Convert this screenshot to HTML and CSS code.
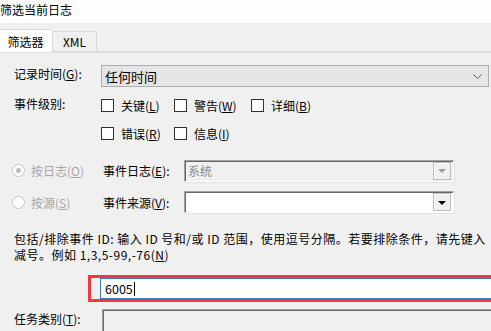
FILE: index.html
```html
<!DOCTYPE html>
<html>
<head>
  <meta charset="utf-8"/>
  <title>筛选当前日志</title>
  <link rel="stylesheet" href="styles.css">
</head>
<body>
  <div class="window-title">筛选当前日志</div>

  <div class="dialog">
    <div class="tabs">
      <div class="tab tab-active">筛选器</div>
      <div class="tab">XML</div>
    </div>

    <div class="panel">
      <div class="row row-time">
        <div class="label">记录时间(<u>G</u>):</div>
        <div class="select">
          <span>任何时间</span>
          <svg class="chevron" width="9" height="5" viewBox="0 0 9 5"><path d="M0.5 0.5 L4.5 4.5 L8.5 0.5" fill="none" stroke="#606060" stroke-width="1"/></svg>
        </div>
      </div>

      <div class="row row-level">
        <div class="label">事件级别:</div>
        <div class="checks">
          <div class="check-row">
            <label class="check check-a"><span class="box"></span><span>关键(<u>L</u>)</span></label>
            <label class="check check-b"><span class="box"></span><span>警告(<u>W</u>)</span></label>
            <label class="check"><span class="box"></span><span>详细(<u>B</u>)</span></label>
          </div>
          <div class="check-row">
            <label class="check check-a"><span class="box"></span><span>错误(<u>R</u>)</span></label>
            <label class="check check-b"><span class="box"></span><span>信息(<u>I</u>)</span></label>
          </div>
        </div>
      </div>

      <div class="row row-source first">
        <div class="radio-label disabled"><span class="radio on"></span><span>按日志(<u>O</u>)</span></div>
        <div class="field-label">事件日志(<u>E</u>):</div>
        <div class="combo combo-disabled">
          <span class="combo-text">系统</span>
          <span class="combo-btn"><span class="tri"></span></span>
        </div>
      </div>

      <div class="row row-source">
        <div class="radio-label disabled"><span class="radio"></span><span>按源(<u>S</u>)</span></div>
        <div class="field-label">事件来源(<u>V</u>):</div>
        <div class="combo">
          <span class="combo-text"></span>
          <span class="combo-btn"><span class="tri"></span></span>
        </div>
      </div>

      <p class="hint">包括/排除事件 ID: 输入 ID 号和/或 ID 范围，使用逗号分隔。若要排除条件，请先键入<br>减号。例如 1,3,5-99,-76(<u>N</u>)</p>

      <div class="highlight">
        <div class="id-input">6005<span class="caret"></span></div>
      </div>

      <div class="row row-task">
        <div class="label">任务类别(<u>T</u>):</div>
        <div class="task-box"></div>
      </div>
    </div>
  </div>
</body>
</html>
```

FILE: styles.css
```css
html, body {
  margin: 0;
  padding: 0;
  width: 100%;
  height: 100%;
  overflow: hidden;
}

body {
  background: #f0f0f0;
  font-family: "Noto Sans CJK SC", "Noto Sans", sans-serif;
  font-size: 12px;
  color: #000;
}

u {
  text-decoration: underline;
  text-underline-offset: 1px;
}

.window-title {
  height: 23px;
  line-height: 20px;
  background: #fdfdfd;
  white-space: nowrap;
}

.dialog {
  padding-top: 6px;
}

/* tabs */
.tabs {
  display: flex;
  align-items: flex-end;
  height: 22px;
  position: relative;
  z-index: 1;
}

.tab {
  height: 19px;
  line-height: 19px;
  width: 43px;
  text-align: center;
  border: 1px solid #d9d9d9;
  border-bottom: none;
  background: #f0f0f0;
}

.tab-active {
  height: 22px;
  line-height: 23px;
  width: 51px;
  background: #fff;
  border-left: none;
  border-right: none;
  margin-bottom: -1px;
  padding-right: 1px;
}

.tab-active + .tab {
  border-left: 1px solid #d9d9d9;
}

.panel {
  border-top: 1px solid #d9d9d9;
  box-shadow: inset 0 1px 0 #e3e3e3;
  padding: 13px 0 0 2px;
}

.row {
  display: flex;
  align-items: flex-start;
}

.label {
  width: 87px;
  padding-left: 12px;
  flex-shrink: 0;
  white-space: nowrap;
}

.row-time .label {
  line-height: 17px;
}

.select {
  display: flex;
  align-items: center;
  justify-content: space-between;
  width: 377px;
  height: 20px;
  border: 1px solid #adadad;
  background: #e5e5e5;
  padding: 0 6px 0 3px;
  font-size: 13px;
}

.chevron {
  margin-top: 1px;
}

/* event level */
.row-level {
  margin-top: 11px;
}

.row-level .label {
  line-height: 12px;
}

.checks {
  display: flex;
  flex-direction: column;
  gap: 15px;
  padding-top: 1px;
}

.check-row {
  display: flex;
  height: 13px;
  align-items: center;
}

.check {
  display: flex;
  align-items: center;
  gap: 7px;
  white-space: nowrap;
}

.check-a {
  width: 73px;
}

.check-b {
  width: 77px;
}

.box {
  width: 11px;
  height: 11px;
  border: 1px solid #333;
  background: #fff;
}

/* log / source */
.row-source {
  align-items: center;
  height: 22px;
  margin-top: 10px;
}

.row-source.first {
  margin-top: 20px;
  height: 21px;
}

.radio-label {
  display: flex;
  align-items: center;
  gap: 6px;
  width: 91px;
  padding-left: 10px;
  flex-shrink: 0;
  white-space: nowrap;
}

.disabled {
  color: #a6a6a6;
}

.radio {
  width: 11px;
  height: 11px;
  border: 1px solid #c4c4c4;
  border-radius: 50%;
  background: #fff;
  display: flex;
  align-items: center;
  justify-content: center;
}

.radio.on::after {
  content: "";
  width: 5px;
  height: 5px;
  border-radius: 50%;
  background: #bdbdbd;
}

.field-label {
  width: 81px;
  flex-shrink: 0;
  white-space: nowrap;
}

.combo {
  display: flex;
  align-items: center;
  justify-content: space-between;
  width: 264px;
  height: 18px;
  background: #fff;
  border-top: 1px solid #a0a0a0;
  border-left: 1px solid #a0a0a0;
  border-bottom: 1px solid #fff;
  border-right: 1px solid #fff;
  box-shadow: inset 1px 1px 0 #696969, 0 1px 0 #e3e3e3, 1px 0 0 #e3e3e3;
  padding: 1px 2px;
}

.combo-disabled {
  background: #f0f0f0;
  color: #8a8a8a;
}

.combo-text {
  padding-left: 1px;
}

.combo-btn {
  width: 16px;
  height: 16px;
  background: #f0f0f0;
  border: 1px solid #bcbcbc;
  box-shadow: inset 1px 1px 0 #fff;
  display: flex;
  align-items: center;
  justify-content: center;
}

.tri {
  width: 0;
  height: 0;
  border-left: 4px solid transparent;
  border-right: 4px solid transparent;
  border-top: 4px solid #000;
  margin-top: 1px;
}

.combo-disabled .tri {
  border-top-color: #a0a0a0;
}

/* hint */
.hint {
  margin: 18px 0 0 12px;
  line-height: 16px;
  letter-spacing: 0.5px;
  white-space: nowrap;
}

/* id field */
.highlight {
  margin: 12px 0 0 86px;
  border: 3px solid #f0393e;
  border-right: none;
  height: 21px;
  padding-left: 9px;
}

.id-input {
  height: 19px;
  background: #fff;
  border: 1px solid #3b78c6;
  border-right: none;
  padding-left: 4px;
  display: flex;
  align-items: center;
  font-size: 12.5px;
}

.caret {
  width: 1px;
  height: 14px;
  background: #000;
  margin-left: 1px;
}

/* task */
.row-task {
  margin-top: 7px;
}

.row-task .label {
  padding-top: 1px;
}

.task-box {
  flex: 1;
  height: 30px;
  margin-left: 1px;
  background: #f0f0f0;
  border-top: 1px solid #a0a0a0;
  border-left: 1px solid #a0a0a0;
  box-shadow: inset 1px 1px 0 #696969;
}
```
